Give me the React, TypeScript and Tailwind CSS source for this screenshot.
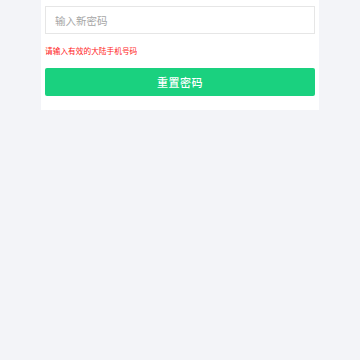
import React, { useState } from 'react';

const App: React.FC = () => {
  const [password, setPassword] = useState('');

  return (
    <div
      className="min-h-[360px] w-full bg-[#f3f4f8]"
      style={{ fontFamily: '"Noto Sans CJK SC", "Noto Sans", sans-serif' }}
    >
      <div className="mx-auto w-[278px] bg-white px-[4px] pt-[6px] pb-[14px]">
        <input
          type="password"
          value={password}
          onChange={(e) => setPassword(e.target.value)}
          placeholder="输入新密码"
          className="block h-[28px] w-full border border-[#e6e6e6] px-[9px] text-[10.5px] text-gray-700 outline-none placeholder:text-[#a6a6a6]"
        />
        <p className="mt-[12px] h-[10px] text-[7.7px] leading-[10px] text-[#ff1a1a]">请输入有效的大陆手机号码</p>
        <button className="mt-[12px] flex h-[28px] w-full items-center justify-center rounded-[2px] bg-[#1ad17f] text-[11px] font-medium tracking-[0.5px] text-white">
          重置密码
        </button>
      </div>
    </div>
  );
};

export default App;
